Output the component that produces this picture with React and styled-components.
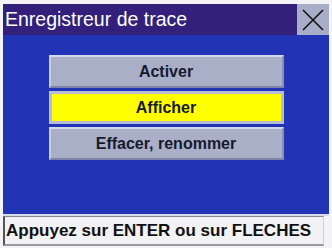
import styled, { createGlobalStyle } from "styled-components";

const GlobalStyle = createGlobalStyle`
  html, body {
    margin: 0;
    padding: 0;
    background: #f4f4f6;
  }
`;

const Screen = styled.div`
  width: 332px;
  height: 248px;
  box-sizing: border-box;
  padding: 4px 3px 2px 3px;
  display: flex;
  flex-direction: column;
  background: #f4f4f6;
  font-family: "Liberation Sans", Arial, sans-serif;
`;

const TitleBar = styled.div`
  height: 31px;
  display: flex;
  align-items: stretch;
  background: #33207a;
`;

const Title = styled.h1`
  flex: 1;
  margin: 0;
  padding-left: 2px;
  display: flex;
  align-items: center;
  color: #ffffff;
  font-size: 19.5px;
  font-weight: normal;
`;

const CloseButton = styled.div`
  width: 32px;
  display: flex;
  align-items: center;
  justify-content: center;
  background: #a9aec8;
`;

const Body = styled.div`
  flex: 1;
  background: #2234b6;
  display: flex;
  flex-direction: column;
  align-items: center;
  padding-top: 20px;
  gap: 3px;
`;

const MenuButton = styled.div`
  width: 235px;
  height: 33px;
  box-sizing: border-box;
  display: flex;
  align-items: center;
  justify-content: center;
  font-size: 16px;
  font-weight: bold;
  color: #161a2e;
  background: ${(p) => (p.$active ? "#ffff00" : "#a9afc7")};
  border-top: 2px solid #d4d8e8;
  border-left: 2px solid #c8cce0;
  border-right: 2px solid #8a90b0;
  border-bottom: 2px solid #7e84a8;
  ${(p) => p.$active && "border: 3px solid #b8bcd4;"}
`;

const StatusBar = styled.div`
  height: 32px;
  box-sizing: border-box;
  border-top: 2px solid #d8dce8;
  display: flex;
  padding-right: 5px;
`;

const StatusText = styled.div`
  flex: 1;
  display: flex;
  align-items: center;
  padding-left: 1px;
  background: #f2f2f4;
  border-left: 2px solid #555;
  border-top: 1px solid #888;
  border-bottom: 2px solid #9a9a9a;
  border-right: 1px solid #d0d0d0;
  font-size: 17px;
  font-weight: bold;
  color: #111;
  white-space: nowrap;
`;

const items = [
  { label: "Activer" },
  { label: "Afficher", active: true },
  { label: "Effacer, renommer" },
];

export default function App() {
  return (
    <>
      <GlobalStyle />
      <Screen>
        <TitleBar>
          <Title>Enregistreur de trace</Title>
          <CloseButton>
            <svg width="24" height="24" viewBox="0 0 24 24">
              <path d="M2 2 L22 22 M22 2 L2 22" stroke="#111" strokeWidth="1.6" />
            </svg>
          </CloseButton>
        </TitleBar>
        <Body>
          {items.map((it) => (
            <MenuButton key={it.label} $active={it.active}>
              {it.label}
            </MenuButton>
          ))}
        </Body>
        <StatusBar>
          <StatusText>Appuyez sur ENTER ou sur FLECHES</StatusText>
        </StatusBar>
      </Screen>
    </>
  );
}
